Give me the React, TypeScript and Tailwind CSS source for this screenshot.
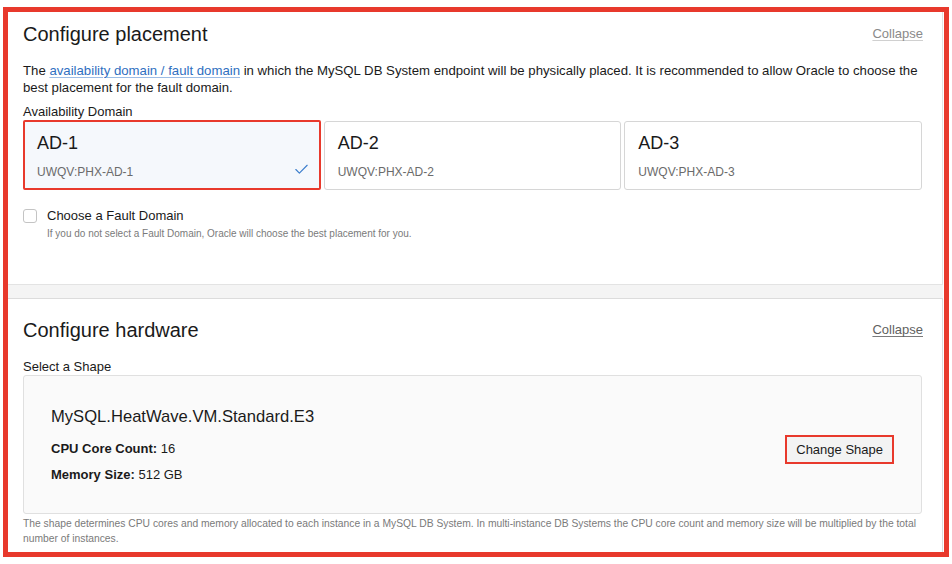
import { Check } from 'lucide-react';

const zones = [
  { name: 'AD-1', id: 'UWQV:PHX-AD-1', selected: true },
  { name: 'AD-2', id: 'UWQV:PHX-AD-2', selected: false },
  { name: 'AD-3', id: 'UWQV:PHX-AD-3', selected: false },
];

export default function App() {
  return (
    <div className="w-[952px] h-[564px] bg-white pt-[7px] pl-[3px] font-['Liberation_Sans',Arial,sans-serif] text-[#1a1a1a]">
      <div className="w-[946px] h-[550px] border-[5px] border-[#e8392c] bg-white flex flex-col">
        {/* Placement */}
        <section className="h-[273px] mr-[1px] border-r border-b border-[#e3e3e3] pl-[15px] pr-[19px] pt-[10px]">
          <div className="h-6 flex items-center justify-between">
            <h2 className="text-[20px] leading-6">Configure placement</h2>
            <button className="text-[13px] text-[#8a8a8a] underline decoration-[#d0d0d0] underline-offset-2">Collapse</button>
          </div>
          <p className="mt-[16px] text-[13.2px] leading-[17px] pr-[2px]">
            The{' '}
            <a className="text-[#2f6fbf] underline decoration-[#9dbde6] underline-offset-2">availability domain / fault domain</a>{' '}
            in which the MySQL DB System endpoint will be physically placed. It is recommended to allow Oracle to choose the best placement for the fault domain.
          </p>
          <div className="mt-[8px] text-[13px] leading-4">Availability Domain</div>
          <div className="grid grid-cols-3 gap-[3px] pr-px">
            {zones.map((z) => (
              <div
                key={z.name}
                className={
                  z.selected
                    ? 'relative h-[70px] rounded-[2px] border-[2px] border-[#e8392c] bg-[#f5f8fc] pl-[12px] pt-[10px]'
                    : 'relative mt-px h-[69px] rounded-[3px] border border-[#d6d6d6] bg-white pl-[13px] pt-[10px]'
                }
              >
                <div className="text-[18px] leading-[22px]">{z.name}</div>
                <div className="mt-[10px] text-[12px] leading-4 text-[#6b6b6b]">{z.id}</div>
                {z.selected && (
                  <Check className="absolute right-[9px] bottom-[10px] h-[17px] w-[17px] text-[#3b7dcc]" strokeWidth={1.6} />
                )}
              </div>
            ))}
          </div>
          <div className="mt-[18px] h-4 flex items-center gap-[10px]">
            <span className="h-[14px] w-[14px] rounded-[3px] border border-[#c4c4c4] bg-white" />
            <span className="text-[13px] leading-4">Choose a Fault Domain</span>
          </div>
          <div className="mt-[3px] pl-[24px] text-[10px] leading-[14px] text-[#7a7a7a]">
            If you do not select a Fault Domain, Oracle will choose the best placement for you.
          </div>
        </section>

        <div className="h-[13px] mr-[1px] bg-[#f4f4f4]" />

        {/* Hardware */}
        <section className="flex-1 mr-[1px] border-t border-r border-[#dcdcdc] pl-[15px] pr-[19px] pt-[19px]">
          <div className="h-6 flex items-center justify-between">
            <h2 className="text-[20px] leading-6">Configure hardware</h2>
            <button className="text-[13px] text-[#5f5f5f] underline decoration-[#7a7a7a] underline-offset-2">Collapse</button>
          </div>
          <div className="mt-[17px] text-[13px] leading-4">Select a Shape</div>
          <div className="mr-px h-[139px] rounded-[3px] border border-[#e0e0e0] bg-[#fafafa] pl-[27px] pr-[27px] pt-[31px] flex justify-between items-start">
            <div>
              <div className="text-[16.6px] leading-5">MySQL.HeatWave.VM.Standard.E3</div>
              <div className="mt-[14px] text-[13px] leading-4">
                <span className="font-bold">CPU Core Count:</span> 16
              </div>
              <div className="mt-[10px] text-[13px] leading-4">
                <span className="font-bold">Memory Size:</span> 512 GB
              </div>
            </div>
            <button className="mt-[28px] h-[29px] px-[9px] border-[2px] border-[#e8392c] bg-[#f3f3f3] text-[13px] leading-4">
              Change Shape
            </button>
          </div>
          <p className="mt-[2px] text-[10.3px] leading-[15px] text-[#7a7a7a] pr-[2px]">
            The shape determines CPU cores and memory allocated to each instance in a MySQL DB System. In multi-instance DB Systems the CPU core count and memory size will be multiplied by the total number of instances.
          </p>
        </section>
      </div>
    </div>
  );
}
